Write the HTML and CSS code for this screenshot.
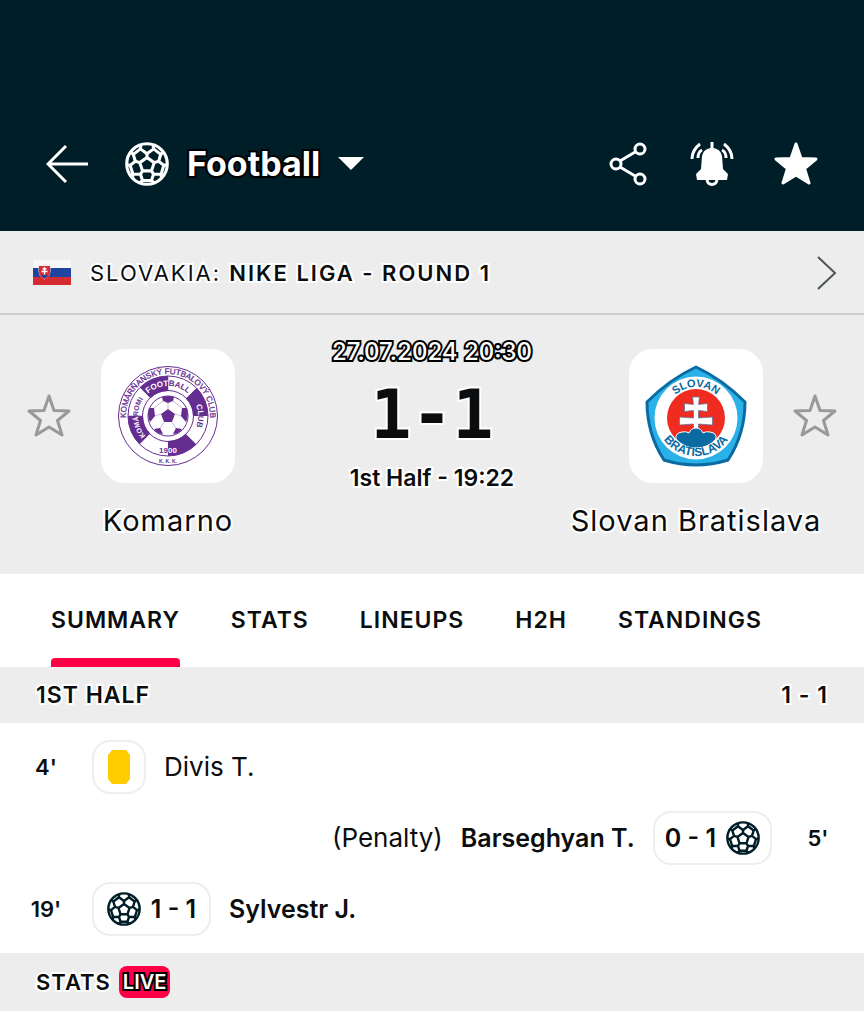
FILE: index.html
```html
<!DOCTYPE html>
<html lang="en">
<head>
<meta charset="utf-8">
<meta name="viewport" content="width=device-width, initial-scale=1">
<title>Komarno - Slovan Bratislava</title>
<link rel="stylesheet" href="styles.css">
</head>
<body>
<svg class="defs" aria-hidden="true">
  <symbol id="ball" viewBox="0 0 128 128">
    <g fill="none" stroke="currentColor" stroke-width="9" stroke-linejoin="round">
      <circle cx="64" cy="64" r="59"/>
      <path d="M64 45 85 60 77 84H51L43 60ZM64 45V34M85 60l13-4M77 84l6 10M51 84l-6 10M43 60l-13-4"/>
      <path d="M46 9 45 20 64 34 83 20 82 9M112 30 104 36 98 56 113 68 122 66M106 104 105 94 83 94 77 112 84 118M44 118 51 112 45 94 23 94 22 104M6 66 15 68 30 56 24 36 16 30"/>
      <path d="M83 20 104 36M113 68 105 94M77 112H51M23 94 15 68M24 36 45 20"/>
    </g>
  </symbol>
  <symbol id="star" viewBox="0 0 44 44">
    <path d="M22 2 27 16.500 42 17 30.500 26.500 35 41 22 33 9 41 13.500 26.500 2 17 17 16.500Z" stroke-linejoin="round"/>
  </symbol>
</svg>

<header class="topbar">
  <button class="icon-btn back" aria-label="Back">
    <svg width="44" height="40" viewBox="0 0 44 40" fill="none" stroke="currentColor" stroke-width="3"><path d="M42 20H2M20 2 2 20 20 38"/></svg>
  </button>
  <button class="sport">
    <svg class="sport-ball"><use href="#ball"/></svg>
    <span class="outlined">Football</span>
    <svg width="26" height="14" viewBox="0 0 26 14"><path d="M0 0H26L13 13Z" fill="currentColor"/></svg>
  </button>
  <div class="actions">
    <button class="icon-btn" aria-label="Share">
      <svg width="44" height="44" viewBox="0 0 44 44" fill="none" stroke="currentColor" stroke-width="3"><circle cx="10" cy="22" r="5"/><circle cx="34" cy="7" r="5"/><circle cx="34" cy="37" r="5"/><path d="M14 19 30 9.500M14 25 30 34.500"/></svg>
    </button>
    <button class="icon-btn" aria-label="Notifications">
      <svg width="44" height="44" viewBox="0 0 44 44"><path d="M20.500 0h3v6q7 1 8.500 8l1 13 5 5-1 6H7l-1-6 5-5 1-13q1.500-7 8.500-8Z" fill="currentColor"/><g fill="none" stroke="currentColor" stroke-width="3"><path d="M17 38q1 4.500 5 4.500t5-4.500"/><path d="M10 2Q2 8 2 17M12 8Q8 10 8 16M34 2Q42 8 42 17M32 8Q36 10 36 16"/></g></svg>
    </button>
    <button class="icon-btn fav-match" aria-label="Remove match from favourites"><svg width="44" height="44"><use href="#star"/></svg></button>
  </div>
</header>

<main>
  <a class="league halo" href="#league">
    <svg width="38" height="25" viewBox="0 0 38 25"><path fill="#f8f8f8" d="M0 0h38v25H0z"/><path fill="#2045a0" d="M0 8h38v9H0z"/><path fill="#d52b31" d="M0 17h38v8H0z"/><path d="M6 6h11v6q0 4.500-5.500 7Q6 16.500 6 12Z" fill="#d52b31" stroke="#f3dfe3"/><path d="M11.500 7v8M9.500 9h4M8.500 11.500h6" stroke="#fff" stroke-width="1.400"/><path d="M8 16q3.500-3 7 0l-3.500 2.500Z" fill="#2045a0"/></svg>
    <span class="league-name">SLOVAKIA: <b>NIKE LIGA - ROUND 1</b></span>
    <svg width="20" height="34" viewBox="0 0 20 34" fill="none" stroke="#4b5558" stroke-width="2"><path d="M1 1 18 17 1 33"/></svg>
  </a>

  <section class="match" aria-label="Match">
    <div class="team">
      <button class="icon-btn fav" aria-label="Add Komarno to favourites"><svg width="44" height="44"><use href="#star"/></svg></button>
      <div class="crest">
        <svg width="102" height="102" viewBox="-51 -51 102 102">
          <defs>
            <path id="k-outer" d="M-42 0A42 42 0 0 1 42 0"/>
            <path id="k-top" d="M-30 0A30 30 0 0 1 30 0"/>
            <path id="k-left" d="M0 30A30 30 0 0 1 0-30"/>
            <path id="k-right" d="M0-30A30 30 0 0 1 0 30"/>
          </defs>
          <g fill="none" stroke="#662d91">
            <circle r="49.500"/>
            <circle r="40"/><circle r="25.500"/><circle r="20"/>
            <circle r="32.500" stroke-width="15" stroke-dasharray="25.525" stroke-dashoffset="25.525"/>
          </g>
          <path fill="#662d91" d="M0-7 7-2 4 6H-4L-7-2ZM-6-19Q0-21 6-19L5-15 0-13-5-15ZM19-8 14-8 13 0 18 6Q21-1 19-8ZM-19-8-14-8-13 0-18 6Q-21-1-19-8ZM14 13 8 12 5 18Q11 18 14 13ZM-14 13-8 12-5 18Q-11 18-14 13Z"/>
          <path fill="none" stroke="#a68bbb" stroke-width=".6" d="M0-7V-13M7-2 13 0M4 6 8 12M-4 6-8 12M-7-2-13 0M5-15 14-8M-5-15-14-8"/>
          <g class="crest-text komarno-text">
            <text font-size="8" stroke="#662d91" stroke-width=".3"><textPath href="#k-outer" startOffset="50%">KOMÁRŇANSKÝ FUTBALOVÝ CLUB</textPath></text>
            <text font-size="8" font-weight="700"><textPath href="#k-top" startOffset="50%"><tspan fill="#fff">FOOT</tspan>BALL</textPath></text>
            <text font-size="7" font-weight="700"><textPath href="#k-left" startOffset="48%"><tspan fill="#fff">KOMÁ</tspan>ROMI</textPath></text>
            <text font-size="8" font-weight="700"><textPath href="#k-right" startOffset="50%"><tspan fill="#fff">CL</tspan>UB</textPath></text>
            <text font-size="8" font-weight="700" x="0" y="37">19<tspan fill="#fff">00</tspan></text>
            <text font-size="5" font-weight="700" x="0" y="47">K. K. K.</text>
          </g>
        </svg>
      </div>
      <h2 class="team-name halo">Komarno</h2>
    </div>

    <div class="result">
      <time class="outlined" datetime="2024-07-27T20:30">27.07.2024 20:30</time>
      <strong class="score halo">1-1</strong>
      <span class="status halo">1st Half - 19:22</span>
    </div>

    <div class="team away">
      <button class="icon-btn fav" aria-label="Add Slovan Bratislava to favourites"><svg width="44" height="44"><use href="#star"/></svg></button>
      <div class="crest">
        <svg width="102" height="102" viewBox="-1 -1 102 102">
          <defs>
            <path id="s-top" d="M19 52A31 31 0 0 1 81 52"/>
            <path id="s-bottom" d="M10 50A40 40 0 0 0 90 50"/>
          </defs>
          <path d="M50 1Q76 13 99 36 99 68 82 94 50 104 18 94 1 68 1 36 24 13 50 1Z" fill="#29b1e8" stroke="#096ba2" stroke-width="3" stroke-linejoin="round"/>
          <circle cx="50" cy="52" r="41.500" fill="#fff"/>
          <circle cx="50" cy="52" r="29" fill="#f02b20"/>
          <path d="M46.500 31h7l-1 7.500 9-1v8l-9-1v7.500l14-1v8l-14-1V64h-5v-6l-14 1v-8l14 1v-7.500l-9 1v-8l9 1Z" fill="#fff" stroke="#566e9f" stroke-width=".7"/>
          <path d="M30 73Q29 67 36 66 40 65 43 67 45 62 50 62 55 62 57 67 60 65 64 66 71 67 70 73 62 82 50 82 38 82 30 73Z" fill="#096ba2" stroke="#fff"/>
          <g class="crest-text slovan-text">
            <text font-size="11"><textPath href="#s-top" startOffset="50%">SLOVAN</textPath></text>
            <text font-size="12"><textPath href="#s-bottom" startOffset="50%">BRATISLAVA</textPath></text>
          </g>
        </svg>
      </div>
      <h2 class="team-name halo">Slovan Bratislava</h2>
    </div>
  </section>

  <nav class="tabs" aria-label="Match sections">
    <a class="active" href="#summary" aria-current="page">SUMMARY</a>
    <a href="#stats">STATS</a>
    <a href="#lineups">LINEUPS</a>
    <a href="#h2h">H2H</a>
    <a href="#standings">STANDINGS</a>
  </nav>

  <section id="summary">
    <h3 class="section-head halo"><span>1ST HALF</span><span>1 - 1</span></h3>
    <ul class="events">
      <li>
        <span class="minute">4'</span>
        <span class="pill"><svg width="24" height="34" viewBox="0 0 24 34" aria-label="Yellow card"><path d="M5 0H19L23 5V29L19 34H5L1 29V5Z" fill="#ffcc00"/></svg></span>
        <span>Divis T.</span>
      </li>
      <li class="away-event">
        <span class="minute">5'</span>
        <span class="pill goal-pill"><svg class="goal"><use href="#ball"/></svg><b>0 - 1</b></span>
        <b>Barseghyan T.</b>
        <span>(Penalty)</span>
      </li>
      <li>
        <span class="minute">19'</span>
        <span class="pill goal-pill"><svg class="goal"><use href="#ball"/></svg><b>1 - 1</b></span>
        <b>Sylvestr J.</b>
      </li>
    </ul>
  </section>

  <section id="stats">
    <h3 class="section-head stats-head"><span class="halo">STATS</span><span class="live outlined">LIVE</span></h3>
  </section>
</main>
</body>
</html>
```
FILE: styles.css
```css
* { box-sizing: border-box; }

body {
  margin: 0;
  background: #fff;
  color: #0b0d0e;
  font-family: Inter, "Liberation Sans", sans-serif;
  font-size: 26px;
  line-height: 32px;
}

a { color: inherit; text-decoration: none; }
b, strong { font-weight: 600; }
h2, h3, ul { margin: 0; padding: 0; font-weight: 400; }
svg { display: block; flex: none; }

button {
  padding: 0;
  border: 0;
  background: none;
  color: inherit;
  font: inherit;
  cursor: pointer;
}

.defs { position: absolute; width: 0; height: 0; }

/* Contour around glyphs */
.halo {
  -webkit-text-stroke: 4px #fff;
  paint-order: stroke fill;
}

.outlined {
  color: #fff;
  -webkit-text-stroke: 4px #000;
  paint-order: stroke fill;
}

/* Top bar */
.topbar {
  display: flex;
  align-items: center;
  padding: 129px 46px 33px;
  background: #001e28;
  color: #fff;
}

.icon-btn { display: grid; place-items: center; }

.sport {
  display: flex;
  align-items: center;
  gap: 18px;
  height: 69px;
  margin-left: 35px;
  font-size: 34px;
  font-weight: 700;
}

.sport-ball { width: 44px; height: 44px; }

.actions {
  display: flex;
  gap: 40px;
  margin-left: auto;
}

.fav-match {
  fill: currentColor;
  stroke: currentColor;
  stroke-width: 3px;
}

/* League row */
.league {
  display: flex;
  align-items: center;
  gap: 19px;
  min-height: 84px;
  padding: 1px 27px 0 33px;
  border-bottom: 2px solid #c8cdcd;
  background: #ededed;
  font-size: 22px;
}

.league-name { flex: 1; letter-spacing: 2px; }

/* Match */
.match {
  display: grid;
  grid-template-columns: minmax(0, 7fr) minmax(0, 4fr) minmax(0, 7fr);
  padding: 34px 0 35px;
  background: #ededed;
}

.team {
  display: grid;
  grid-template-columns: 1fr auto 1fr;
  align-items: center;
  row-gap: 20px;
}

.away .fav { order: 1; }
.away .crest { grid-column: 2; }
.away .team-name { order: 2; }

.fav {
  padding-right: 3px;
  fill: none;
  stroke: #999;
  stroke-width: 3px;
}

.away .fav { padding: 0 0 0 3px; }

.crest {
  display: grid;
  place-items: center;
  width: 134px;
  height: 134px;
  border-radius: 24px;
  background: #fff;
}

.crest-text { font-family: "Liberation Sans", sans-serif; text-anchor: middle; }
.komarno-text { fill: #662d91; }
.slovan-text { fill: #096ba2; font-weight: 700; }

.team-name {
  grid-column: 1 / -1;
  font-size: 29px;
  line-height: 36px;
  letter-spacing: 1px;
  text-align: center;
}

.result {
  display: flex;
  flex-direction: column;
  align-items: center;
  align-self: start;
  gap: 12px;
  margin-top: -10px;
  white-space: nowrap;
  font-size: 23px;
  line-height: 26px;
}

.result time { font-size: 24px; font-weight: 500; }

.score { font: 700 68px/76px "DejaVu Sans Mono", monospace; }

.status { font-weight: 600; }

/* Tabs */
.tabs {
  display: flex;
  gap: 51px;
  padding: 0 51px;
  font-size: 23px;
  font-weight: 600;
  letter-spacing: 1px;
}

.tabs a {
  position: relative;
  padding: 30px 0 31px;
}

.tabs .active::after {
  content: "";
  position: absolute;
  inset: auto 0 0;
  height: 9px;
  border-radius: 4px 4px 0 0;
  background: #ff0046;
}

/* Section bars */
.section-head {
  display: flex;
  align-items: center;
  justify-content: space-between;
  min-height: 56px;
  padding: 0 36px;
  background: #ededed;
  font-size: 23px;
  font-weight: 600;
  letter-spacing: 1px;
}

.stats-head {
  justify-content: flex-start;
  gap: 8px;
  min-height: 58px;
  font-size: 22px;
}

.live {
  padding: 0 4px;
  border-radius: 8px;
  background: #ff0046;
  font-size: 20px;
  letter-spacing: 0;
}

/* Events */
.events {
  display: grid;
  gap: 17px;
  padding: 17px 0;
  list-style: none;
}

.events li { display: flex; align-items: center; gap: 18px; }
.events b { font-size: 25px; }
.away-event { flex-direction: row-reverse; }

.minute {
  width: 92px;
  margin-right: -18px;
  font-size: 22px;
  font-weight: 600;
  text-align: center;
}

.away-event .minute { margin: 0 0 0 -18px; }

.pill {
  display: flex;
  align-items: center;
  justify-content: center;
  gap: 10px;
  min-width: 54px;
  height: 54px;
  padding: 0 10px;
  border: 2px solid #eee;
  border-radius: 18px;
}

.goal-pill { min-width: 119px; }
.away-event .pill { flex-direction: row-reverse; }
.goal { width: 34px; height: 34px; color: #001e28; }
```
